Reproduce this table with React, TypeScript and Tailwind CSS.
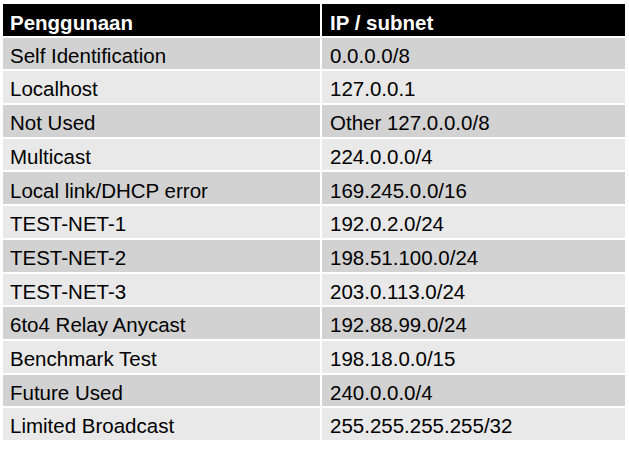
import React from "react";

const rows: [string, string][] = [
  ["Self Identification", "0.0.0.0/8"],
  ["Localhost", "127.0.0.1"],
  ["Not Used", "Other 127.0.0.0/8"],
  ["Multicast", "224.0.0.0/4"],
  ["Local link/DHCP error", "169.245.0.0/16"],
  ["TEST-NET-1", "192.0.2.0/24"],
  ["TEST-NET-2", "198.51.100.0/24"],
  ["TEST-NET-3", "203.0.113.0/24"],
  ["6to4 Relay Anycast", "192.88.99.0/24"],
  ["Benchmark Test", "198.18.0.0/15"],
  ["Future Used", "240.0.0.0/4"],
  ["Limited Broadcast", "255.255.255.255/32"],
];

export default function App() {
  return (
    <div className="w-[629px] h-[449px] bg-white pl-[3px] pt-[4px] font-['Liberation_Sans',Arial,sans-serif]">
      <div className="grid w-[622px] h-[436px] grid-cols-[317px_303px] grid-rows-[repeat(13,1fr)] gap-[2px] text-[20.5px] leading-none">
        <div className="bg-black text-white font-bold flex items-center pl-[7px] pt-[6px]">Penggunaan</div>
        <div className="bg-black text-white font-bold flex items-center pl-[8px] pt-[6px]">IP / subnet</div>
        {rows.map(([a, b], i) => {
          const bg = i % 2 === 0 ? "bg-[#d2d2d2]" : "bg-[#e9e9e9]";
          return (
            <React.Fragment key={i}>
              <div className={`${bg} text-black flex items-center pl-[7px] pt-[5px]`}>{a}</div>
              <div className={`${bg} text-black flex items-center pl-[8px] pt-[5px]`}>{b}</div>
            </React.Fragment>
          );
        })}
      </div>
    </div>
  );
}
